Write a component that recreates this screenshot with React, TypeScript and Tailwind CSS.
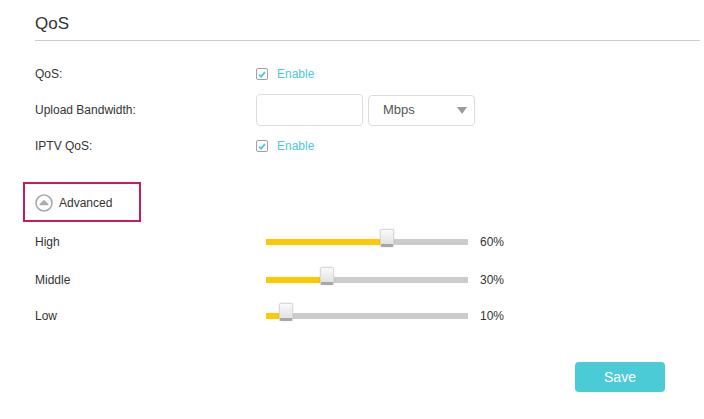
import React from "react";

const font = { fontFamily: '"Liberation Sans", Arial, sans-serif' };

function Check({ label }: { label: string }) {
  return (
    <div className="flex items-center gap-[9px]">
      <span className="flex h-[12px] w-[12px] items-center justify-center rounded-[2px] border border-[#a0a0a0] bg-white">
        <svg width="8" height="7" viewBox="0 0 8 7">
          <path d="M1 3.6 L3.1 5.6 L7 1.2" fill="none" stroke="#4acbd6" strokeWidth="1.8" />
        </svg>
      </span>
      <span className="text-[12px] text-[#4acbd6]">{label}</span>
    </div>
  );
}

function Slider({ label, value }: { label: string; value: number }) {
  const pct = value / 100;
  return (
    <div className="flex h-[20px] items-center">
      <div className="w-[221px] text-[12px] text-[#333]">{label}</div>
      <div className="relative ml-[10px] h-[6px] w-[202px] bg-[#cccccc]">
        <div className="h-full bg-[#ffc800]" style={{ width: `${pct * 202}px` }} />
        <div
          className="absolute top-[-10px] h-[18px] w-[14px] rounded-[2px] border border-[#d8d8d8] border-b-[3px] border-b-[#a8a8a8] bg-gradient-to-b from-[#fafafa] to-[#e2e2e2] shadow-[0_0_2px_rgba(0,0,0,0.15)]"
          style={{ left: `${pct * 202 - 7}px` }}
        />
      </div>
      <div className="ml-[12px] text-[12px] text-[#333]">{value}%</div>
    </div>
  );
}

export default function App() {
  return (
    <div className="h-[419px] w-[704px] bg-white pl-[35px]" style={font}>
      <div className="w-[665px] border-b border-[#cccccc] pt-[13px] pb-[5px] text-[17px] leading-[22px] text-[#333]">
        QoS
      </div>

      <div className="mt-[21px] flex h-[24px] items-center">
        <div className="w-[221px] text-[12px] text-[#333]">QoS:</div>
        <Check label="Enable" />
      </div>

      <div className="mt-[8px] flex h-[32px] items-center">
        <div className="w-[221px] text-[12px] text-[#333]">Upload Bandwidth:</div>
        <input className="h-[32px] w-[107px] rounded-[4px] border border-[#dcdcdc] bg-white outline-none" />
        <div className="ml-[5px] flex h-[31px] w-[107px] items-center justify-between rounded-[4px] border border-[#dcdcdc] bg-white pl-[14px] pr-[7px]">
          <span className="text-[13px] text-[#555]">Mbps</span>
          <svg width="10" height="7" viewBox="0 0 10 7">
            <path d="M0 0 H10 L5 7 Z" fill="#9a9a9a" />
          </svg>
        </div>
      </div>

      <div className="mt-[8px] flex h-[24px] items-center">
        <div className="w-[221px] text-[12px] text-[#333]">IPTV QoS:</div>
        <Check label="Enable" />
      </div>

      <div className="-ml-[12px] mt-[24px] flex h-[40px] w-[118px] items-center gap-[6px] border-2 border-[#c21d64] pl-[10px] pt-[2px]">
        <svg width="18" height="18" viewBox="0 0 18 18">
          <circle cx="9" cy="9" r="8" fill="none" stroke="#ababab" strokeWidth="1.6" />
          <path d="M5.2 10.6 L9 6.8 L12.8 10.6 Z" fill="#ababab" stroke="#ababab" strokeWidth="1.4" strokeLinejoin="round" />
        </svg>
        <span className="text-[12px] text-[#333]">Advanced</span>
      </div>

      <div className="mt-[10px]">
        <Slider label="High" value={60} />
      </div>
      <div className="mt-[18px]">
        <Slider label="Middle" value={30} />
      </div>
      <div className="mt-[16px]">
        <Slider label="Low" value={10} />
      </div>

      <div className="mt-[36px] flex w-[630px] justify-end">
        <button className="h-[30px] w-[90px] rounded-[4px] bg-[#4acbd6] text-[14px] text-white">
          Save
        </button>
      </div>
    </div>
  );
}
